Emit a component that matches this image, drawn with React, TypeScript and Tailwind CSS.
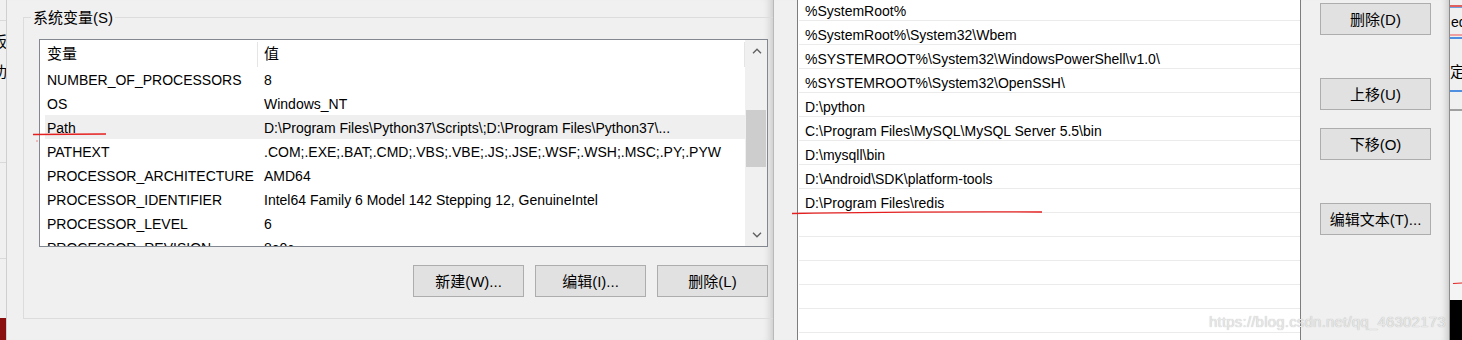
import React from "react";

const Chevron = ({ up }: { up?: boolean }) => (
  <svg width="10" height="6" viewBox="0 0 10 6" className="block">
    <path
      d={up ? "M1 5.2 L5 1.2 L9 5.2" : "M1 0.8 L5 4.8 L9 0.8"}
      fill="none"
      stroke="#606060"
      strokeWidth="1.4"
    />
  </svg>
);

const leftRows: [string, string][] = [
  ["NUMBER_OF_PROCESSORS", "8"],
  ["OS", "Windows_NT"],
  ["Path", "D:\\Program Files\\Python37\\Scripts\\;D:\\Program Files\\Python37\\..."],
  ["PATHEXT", ".COM;.EXE;.BAT;.CMD;.VBS;.VBE;.JS;.JSE;.WSF;.WSH;.MSC;.PY;.PYW"],
  ["PROCESSOR_ARCHITECTURE", "AMD64"],
  ["PROCESSOR_IDENTIFIER", "Intel64 Family 6 Model 142 Stepping 12, GenuineIntel"],
  ["PROCESSOR_LEVEL", "6"],
  ["PROCESSOR_REVISION", "8e0c"],
];

const rightRows: string[] = [
  "%SystemRoot%",
  "%SystemRoot%\\System32\\Wbem",
  "%SYSTEMROOT%\\System32\\WindowsPowerShell\\v1.0\\",
  "%SYSTEMROOT%\\System32\\OpenSSH\\",
  "D:\\python",
  "C:\\Program Files\\MySQL\\MySQL Server 5.5\\bin",
  "D:\\mysqll\\bin",
  "D:\\Android\\SDK\\platform-tools",
  "D:\\Program Files\\redis",
  "",
  "",
  "",
  "",
  "",
  "",
];

const Btn = ({ children, className = "" }: { children: React.ReactNode; className?: string }) => (
  <div
    className={`flex h-[32px] w-[111px] shrink-0 items-center justify-center border border-[#adadad] bg-[#e1e1e1] text-[15px] leading-none text-black ${className}`}
  >
    {children}
  </div>
);

export default function App() {
  return (
    <div className="relative flex h-[340px] w-[1462px] overflow-hidden bg-[#f0f0f0] text-[14px] text-black font-['Liberation_Sans','Noto_Sans_CJK_SC',sans-serif]">
      {/* left remnant strip */}
      <div className="flex h-full w-[7px] shrink-0 flex-col overflow-hidden border-r border-[#cfcfcf]">
        <div className="h-[21px] shrink-0 border-b border-[#d9d9d9]" />
        <div className="-ml-[8px] mt-[11px] h-[20px] text-[15px] leading-[20px] whitespace-nowrap">阪</div>
        <div className="-ml-[8px] mt-[10px] h-[20px] text-[15px] leading-[20px] whitespace-nowrap">功</div>
        <div className="mt-[80px] h-px shrink-0 bg-[#d9d9d9]" />
        <div className="mt-[95px] h-px shrink-0 bg-[#d9d9d9]" />
        <div className="flex-1" />
        <div className="h-[22px] shrink-0 bg-[#8a1010]" />
      </div>

      {/* left dialog */}
      <div className="h-full w-[766px] shrink-0 overflow-hidden shadow-[inset_-9px_0_8px_-7px_rgba(0,0,0,0.18)]">
        <div className="ml-[16px] mt-[17px] flex h-[302px] w-[780px] flex-col border-b border-l border-t border-[#dcdcdc]">
          <div className="-mt-[10px] ml-[7px] w-fit bg-[#f0f0f0] px-[2px] text-[15px] leading-[20px]">
            系统变量(S)
          </div>
          {/* list view */}
          <div className="ml-[15px] mt-[11px] flex h-[208px] w-[729px] border border-[#828790] bg-white">
            <div className="flex w-[705px] flex-col overflow-hidden">
              {/* header */}
              <div className="flex h-[27px] shrink-0 items-end">
                <div className="flex h-[27px] w-[217px] items-center pl-[7px] text-[15px] leading-none">变量</div>
                <div className="h-[25px] w-px bg-[#e5e5e5]" />
                <div className="flex h-[27px] flex-1 items-center pl-[6px] text-[15px] leading-none">值</div>
                <div className="h-[25px] w-px bg-[#e5e5e5]" />
              </div>
              {leftRows.map(([k, v]) => (
                <div
                  key={k}
                  className={`ml-[5px] flex h-[24px] shrink-0 items-center whitespace-nowrap pt-[2px] leading-[22px] ${
                    k === "Path" ? "bg-[#efefef]" : ""
                  }`}
                >
                  <div className="w-[212px] shrink-0 overflow-hidden pl-[2px]">{k}</div>
                  <div className="flex-1 overflow-hidden pl-[7px]">{v}</div>
                </div>
              ))}
            </div>
            {/* scrollbar */}
            <div className="flex w-[22px] flex-col bg-[#f0f0f0]">
              <div className="flex h-[22px] shrink-0 items-center justify-center pl-[1px]">
                <Chevron up />
              </div>
              <div className="mx-[1px] mt-[48px] h-[57px] shrink-0 bg-[#cdcdcd]" />
              <div className="flex-1" />
              <div className="flex h-[22px] shrink-0 items-center justify-center pl-[1px]">
                <Chevron />
              </div>
            </div>
          </div>
          {/* buttons */}
          <div className="ml-[15px] mt-[18px] flex w-[729px] justify-end gap-[11px]">
            <Btn>新建(W)...</Btn>
            <Btn>编辑(I)...</Btn>
            <Btn>删除(L)</Btn>
          </div>
        </div>
      </div>

      {/* right dialog */}
      <div className="flex h-full w-[676px] shrink-0 border-l border-[#b9b9b9] shadow-[inset_-8px_0_7px_-6px_rgba(0,0,0,0.18)]">
        <div className="ml-[23px] flex h-full w-[504px] shrink-0 flex-col overflow-hidden border-x border-[#7d7d7d] bg-white">
          <div className="-mt-[3px] flex flex-col">
            {rightRows.map((r, i) => (
              <div
                key={i}
                className="ml-[1px] h-[24px] shrink-0 border-b border-[#ebebeb] pl-[6px] pt-[4px] leading-[20px] whitespace-nowrap"
              >
                {r}
              </div>
            ))}
          </div>
        </div>
        <div className="ml-[19px] flex flex-col">
          <Btn className="mt-[3px]">删除(D)</Btn>
          <Btn className="mt-[43px]">上移(U)</Btn>
          <Btn className="mt-[18px]">下移(O)</Btn>
          <Btn className="mt-[43px]">编辑文本(T)...</Btn>
        </div>
      </div>

      {/* far right remnant */}
      <div className="flex h-full w-[13px] shrink-0 flex-col overflow-hidden border-l border-[#8c8c8c] bg-[#f0f0f0]">
        <div className="mt-[5px] h-[2px] shrink-0 bg-[#e06060]" />
        <div className="h-px shrink-0 bg-[#6fa0e0]" />
        <div className="mt-[5px] h-[18px] whitespace-nowrap pl-px text-[14px] leading-[18px]">ed</div>
        <div className="mt-[3px] h-[2px] shrink-0 bg-[#f0a0a0]" />
        <div className="mt-px h-[2px] shrink-0 bg-[#4f8fe0]" />
        <div className="mt-[24px] h-[18px] whitespace-nowrap text-[15px] leading-[18px]">定</div>
        <div className="mt-[9px] h-[2px] shrink-0 bg-[#4f8fe0]" />
        <div className="mt-[17px] h-[2px] shrink-0 bg-[#a0a0a0]" />
        <div className="flex-1 bg-[#f4f4f4]" />
        <div className="h-[40px] shrink-0 bg-black" />
      </div>

      {/* red annotations */}
      <svg className="pointer-events-none absolute left-0 top-0" width="1462" height="340">
        <path d="M33 134.5 L106 134" stroke="#e52020" strokeWidth="1.3" fill="none" />
        <rect x="36.5" y="140.5" width="1" height="1" fill="#e52020" />
        <path d="M792 213.5 Q 900 211.5 1042 212" stroke="#e52020" strokeWidth="1.3" fill="none" />
        <path d="M1453 283.5 L1462 283" stroke="#e52020" strokeWidth="1" fill="none" />
      </svg>

      {/* watermark */}
      <div className="pointer-events-none absolute left-[1209px] top-[312px] whitespace-nowrap text-[15px] leading-[20px] tracking-[0.2px] text-[#e8e8e8] [text-shadow:0_0_1px_rgba(0,0,0,0.3)] font-['Liberation_Sans',sans-serif]">
        https://blog.csdn.net/qq_46302173
      </div>
    </div>
  );
}
